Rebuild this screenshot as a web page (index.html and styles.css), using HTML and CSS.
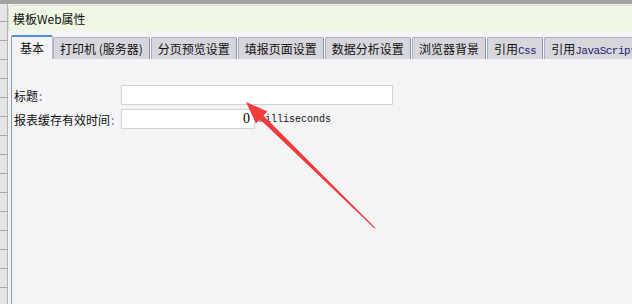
FILE: index.html
```html
<!DOCTYPE html>
<html lang="zh-CN">
<head>
  <meta charset="UTF-8" />
  <title>模板Web属性</title>
  <link rel="stylesheet" href="styles.css">
</head>
<body>
  <div class="topbar"></div>
  <div class="main">
    <div class="rowhead"></div>
    <div class="dialog">
      <div class="title">模板Web属性</div>

      <div class="tabs">
        <div class="tab active">基本</div>
        <div class="tab">打印机 (服务器)</div>
        <div class="tab">分页预览设置</div>
        <div class="tab">填报页面设置</div>
        <div class="tab">数据分析设置</div>
        <div class="tab">浏览器背景</div>
        <div class="tab">引用<span class="code">Css</span></div>
        <div class="tab">引用<span class="code">JavaScript</span></div>
      </div>

      <div class="panel">
        <div class="field">
          <label class="label">标题<span class="colon">:</span></label>
          <input class="input wide" type="text" value="">
        </div>
        <div class="field">
          <label class="label">报表缓存有效时间<span class="colon">:</span></label>
          <input class="input num" type="text" value="0">
          <span class="unit">milliseconds</span>
        </div>
      </div>
    </div>
  </div>

  <!-- annotation arrow -->
  <svg class="arrow" width="632" height="304" viewBox="0 0 632 304">
    <polygon points="246,102 267.5,111.5 263.4,115.6 375.5,228 374.5,228.5 259.9,119.2 256,123.5" fill="#f03c3c"/>
  </svg>
</body>
</html>
```

FILE: styles.css
```css
body {
  margin: 0;
  width: 632px;
  height: 304px;
  overflow: hidden;
  background-color: #f4f4f7;
  font-family: "Noto Sans CJK SC", "Noto Sans", sans-serif;
  font-size: 12px;
  color: #111;
  position: relative;
}
.topbar {
  height: 4px;
  background-color: #a2a2a2;
}
.main {
  display: flex;
  height: 300px;
}
.rowhead {
  width: 7px;
  border-right: 1px solid #b4b4b4;
  background-color: #e4e4e4;
  background-image: repeating-linear-gradient(to bottom, transparent 0, transparent 18px, #a8a8a8 18px, #a8a8a8 19px);
  background-position: 0 -1px;
}
.dialog {
  flex: 1;
  display: flex;
  flex-direction: column;
  min-width: 0;
}
.title {
  height: 25px;
  line-height: 25px;
  margin-top: 1px;
  padding-left: 4px;
  background-color: #eef7e3;
  border-top-left-radius: 5px;
  border-top: 1px solid #d6dccc;
  border-left: 1px solid #d6dccc;
  white-space: nowrap;
}
.tabs {
  display: flex;
  align-items: flex-end;
  gap: 1px;
  margin-top: 3px;
  padding-left: 3px;
  white-space: nowrap;
  height: 25px;
}
.tab {
  flex-shrink: 0;
  height: 21px;
  line-height: 21px;
  padding: 0 6px;
  background-color: #d6d6dc;
  border: 1px solid #a8b0c6;
  border-bottom: none;
  border-right-color: #8c94aa;
  border-radius: 2px 2px 0 0;
}
.tab.active {
  height: 22px;
  line-height: 22px;
  padding: 0 8px;
  background-color: #f4f4f7;
  border-top: 2px solid #4a8fd8;
  border-left-color: #8898b8;
  border-right-color: #b8bcc8;
  margin-right: -1px;
}
.code {
  font-family: "Liberation Mono", "DejaVu Sans Mono", monospace;
  font-size: 11px;
  color: #1c2470;
  letter-spacing: -0.5px;
}
.panel {
  flex: 1;
  margin-left: 3px;
  border-left: 1px solid #8898b8;
  padding: 26px 0 0 2px;
}
.field {
  display: flex;
  align-items: center;
  height: 20px;
  margin-bottom: 4px;
}
.label {
  width: 107px;
  flex-shrink: 0;
  font-size: 12px;
}
.colon {
  color: #7a5a8a;
  margin-left: 1px;
}
.input {
  box-sizing: border-box;
  height: 20px;
  border: 1px solid #d2d2d2;
  background-color: #fff;
  font-family: "Liberation Serif", serif;
  font-size: 14px;
  padding: 0 4px;
  margin: 0;
}
.input.wide {
  width: 272px;
}
.input.num {
  width: 134px;
  text-align: right;
}
.unit {
  margin-left: 4px;
  font-family: "Liberation Mono", "DejaVu Sans Mono", monospace;
  font-size: 10px;
  color: #111;
}
.arrow {
  position: absolute;
  left: 0;
  top: 0;
  pointer-events: none;
}
```
